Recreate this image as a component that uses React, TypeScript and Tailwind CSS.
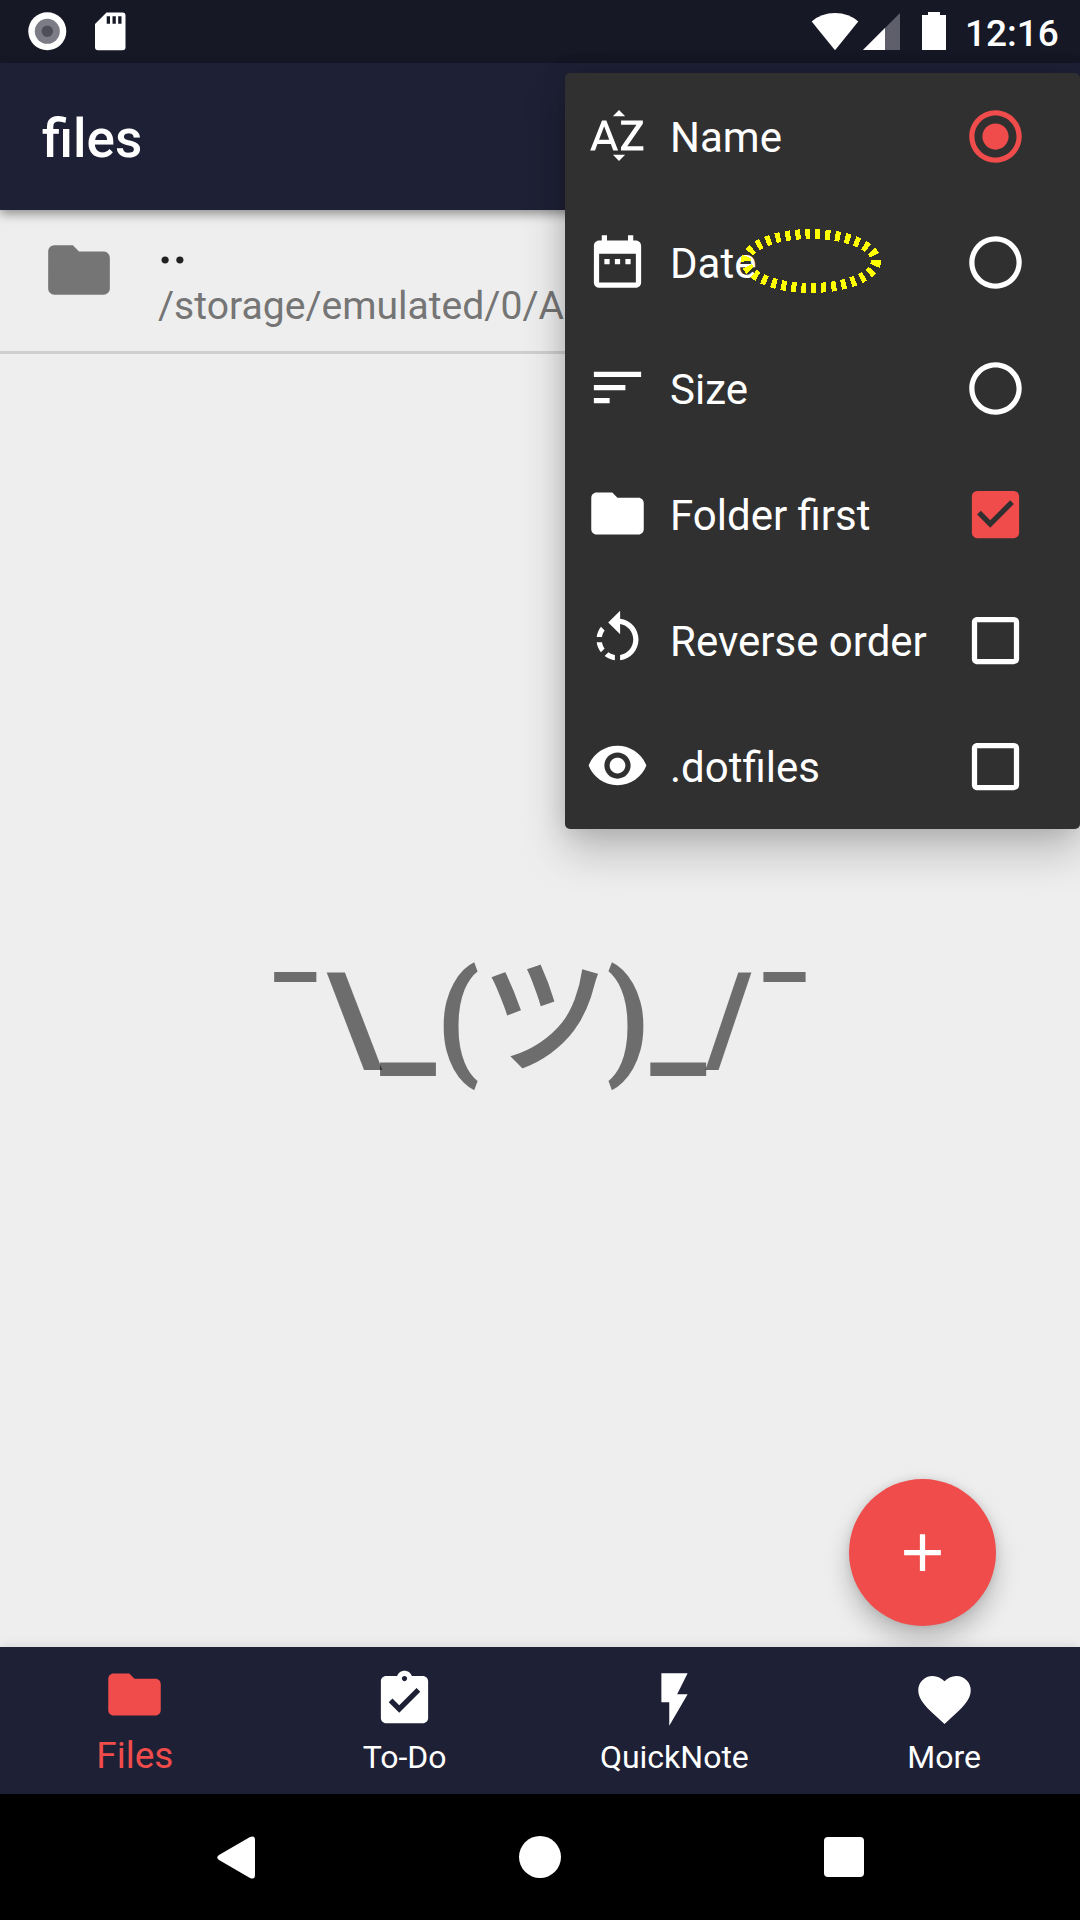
import type { ReactNode } from "react";
import {
  MdAdd,
  MdAssignmentTurnedIn,
  MdCheckBox,
  MdCheckBoxOutlineBlank,
  MdDateRange,
  MdFavorite,
  MdFlashOn,
  MdFolder,
  MdRadioButtonChecked,
  MdRadioButtonUnchecked,
  MdRemoveRedEye,
  MdRotateLeft,
  MdSort,
  MdSortByAlpha,
} from "react-icons/md";

function StatusBar() {
  return (
    <div className="flex h-[63px] items-start bg-[#171826] pl-[28px] pt-[12px] text-white">
      <svg width="39" height="39" viewBox="0 0 39 39">
        <circle cx="19.3" cy="19.3" r="19" fill="#fff" />
        <circle cx="19.3" cy="19.3" r="12.5" fill="#7b7c86" />
        <circle cx="19.3" cy="19.3" r="5.7" fill="#4f4f5a" />
      </svg>
      <svg className="ml-[28px]" width="31" height="39" viewBox="0 0 31 39">
        <path
          fill="#fff"
          fillRule="evenodd"
          d="M11.5 .5H27.5a3 3 0 0 1 3 3V35.300a3 3 0 0 1-3 3H3a3 3 0 0 1-3-3V12ZM11.700 4.300V11.800H15V4.300ZM17.500 4.300V11.800H20.800V4.300ZM23.200 4.300V11.800H26.500V4.300Z"
        />
      </svg>
      <svg className="ml-[685px]" width="48" height="39" viewBox="0 0 48 39">
        <path fill="#fff" d="M.7 9.500Q10 1 24 1T47.300 9.500L24 38.300Z" />
      </svg>
      <svg className="ml-[4px]" width="38" height="39" viewBox="0 0 38 39">
        <path fill="#5e5f6a" d="M37 1V38H0Z" />
        <path fill="#fff" d="M22 16V38H0Z" />
      </svg>
      <svg className="ml-[21px]" width="24" height="39" viewBox="0 0 24 39">
        <path fill="#fff" d="M6 0H18V3H24V38H0V3H6Z" />
      </svg>
      <span className="ml-[19px] whitespace-nowrap text-[37px] font-medium leading-[43px]">12:16</span>
    </div>
  );
}

function MenuRow({ icon, label, control }: { icon: ReactNode; label: string; control: ReactNode }) {
  return (
    <div className="flex h-[126px] items-center pb-px pl-[21px] pr-[53px]">
      {icon}
      <span className="ml-[21px] flex-1 whitespace-nowrap pt-[4px] text-[42px] leading-[49px]">{label}</span>
      <span className="pt-px">{control}</span>
    </div>
  );
}

function SortMenu() {
  return (
    <div className="absolute left-[565px] top-[73px] w-[515px] rounded-[5px] bg-[#303030] text-white shadow-[0_22px_44px_rgba(0,0,0,0.22),0_0_26px_rgba(0,0,0,0.12)]">
      <MenuRow icon={<MdSortByAlpha size={63} />} label="Name" control={<MdRadioButtonChecked size={63} className="text-[#ef4c4b]" />} />
      <MenuRow icon={<MdDateRange size={63} />} label="Date" control={<MdRadioButtonUnchecked size={63} />} />
      <MenuRow icon={<MdSort size={63} />} label="Size" control={<MdRadioButtonUnchecked size={63} />} />
      <MenuRow icon={<MdFolder size={63} />} label="Folder first" control={<MdCheckBox size={63} className="text-[#ef4c4b]" />} />
      <MenuRow icon={<MdRotateLeft size={63} />} label="Reverse order" control={<MdCheckBoxOutlineBlank size={63} />} />
      <MenuRow icon={<MdRemoveRedEye size={63} />} label=".dotfiles" control={<MdCheckBoxOutlineBlank size={63} />} />
      <svg className="absolute left-[176px] top-[156px]" width="140" height="64" viewBox="0 0 140 64" shapeRendering="crispEdges">
        <ellipse cx="70" cy="32" rx="65" ry="27" fill="none" stroke="#ff0" strokeWidth="10" strokeDasharray="5 5" />
      </svg>
    </div>
  );
}

function Tab({ icon, label }: { icon: ReactNode; label: string }) {
  return (
    <div className="flex flex-1 flex-col items-center pt-[21px] text-white">
      {icon}
      <span className="mt-[8px] text-[32px] leading-[37px]">{label}</span>
    </div>
  );
}

export default function App() {
  return (
    <div className="relative flex h-[1920px] w-[1080px] flex-col overflow-hidden bg-[#eeeeee] font-[Roboto,'Noto_Sans_CJK_JP',sans-serif]">
      <StatusBar />
      <header className="relative z-10 flex h-[147px] items-center bg-[#1e2035] pl-[42px] shadow-[0_4px_10px_rgba(0,0,0,0.4)]">
        <h1 className="pt-[4px] text-[53px] font-medium leading-[62px] text-white">files</h1>
      </header>
      <main className="relative flex flex-1 flex-col">
        <div className="flex h-[144px] border-b-[3px] border-[#cfcfcf] pl-[42px] pt-[23px]">
          <MdFolder size={74} className="shrink-0 text-[#757575]" />
          <div className="ml-[42px] flex flex-col whitespace-nowrap">
            <span className="-mt-[19px] text-[53px] font-medium leading-[62px] text-[#212121]">..</span>
            <span className="mt-[7px] text-[39.1px] leading-[46px] text-[#757575]">/storage/emulated/0/A</span>
          </div>
        </div>
        <div className="mt-[580px] flex justify-center text-[126px] font-bold leading-[170px] text-black/54">
          <span className="whitespace-nowrap">
            ¯\_(
            <span className="relative left-[2px] font-normal text-[#6d6d6d] [-webkit-text-stroke:4px_#6d6d6d]">ツ</span>
            )_/¯
          </span>
        </div>
        <button className="absolute bottom-[21px] right-[84px] flex size-[147px] items-center justify-center rounded-full bg-[#ef4c4b] text-white shadow-[0_14px_24px_rgba(0,0,0,0.22),0_0_10px_rgba(0,0,0,0.1)]">
          <MdAdd size={63} />
        </button>
      </main>
      <nav className="relative flex h-[147px] bg-[#1e2035] pr-px shadow-[0_0_12px_rgba(0,0,0,0.12)]">
        <div className="flex flex-1 flex-col items-center pt-[15.5px] text-[#ef4c4b]">
          <MdFolder size={63} />
          <span className="mt-[8px] text-[37px] leading-[43px]">Files</span>
        </div>
        <Tab icon={<MdAssignmentTurnedIn size={63} />} label="To-Do" />
        <Tab icon={<MdFlashOn size={63} />} label="QuickNote" />
        <Tab icon={<MdFavorite size={63} />} label="More" />
      </nav>
      <div className="flex h-[126px] items-center bg-black pl-[217px]">
        <svg width="38" height="43" viewBox="0 0 38 43">
          <path fill="#fff" d="M2 19L33 1Q38-1 38 4V39Q38 44 33 42L2 24Q-1.500 21.500 2 19Z" />
        </svg>
        <div className="ml-[264px] size-[42px] rounded-full bg-white" />
        <div className="ml-[263px] size-[40px] rounded-[4px] bg-white" />
      </div>
      <div className="absolute inset-0 z-20">
        <SortMenu />
      </div>
    </div>
  );
}
